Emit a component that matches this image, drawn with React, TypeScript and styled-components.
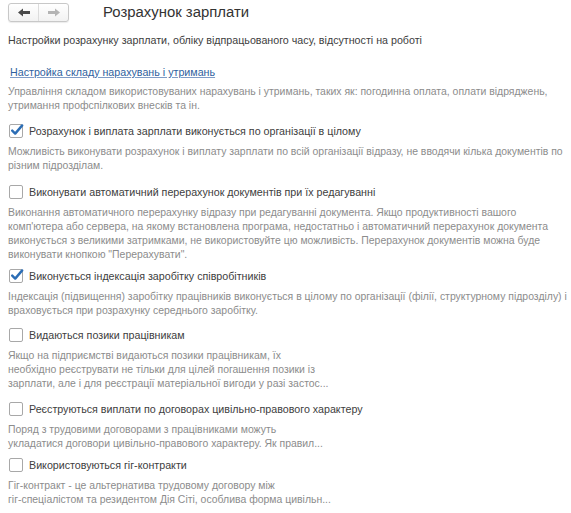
import React from "react";
import styled, { createGlobalStyle } from "styled-components";

const Global = createGlobalStyle`
  html, body { margin: 0; padding: 0; background: #ffffff; }
  body { font-family: "Liberation Sans", Arial, sans-serif; }
`;

const Page = styled.div`
  width: 571px;
  height: 513px;
  overflow: hidden;
  padding: 3px 8px 0 8px;
  box-sizing: border-box;
`;

const Header = styled.div`
  display: flex;
  align-items: center;
  height: 19px;
`;

const NavGroup = styled.div`
  display: flex;
  border: 1px solid #c8c8c8;
  border-radius: 3px;
  background: linear-gradient(#ffffff, #f2f2f2);
  box-shadow: 0 1px 1px rgba(0, 0, 0, 0.08);
`;

const NavButton = styled.div<{ $first?: boolean }>`
  width: 29px;
  height: 17px;
  display: flex;
  align-items: center;
  justify-content: center;
  border-left: ${(p) => (p.$first ? "none" : "1px solid #dcdcdc")};
`;

const Title = styled.h1`
  margin: 0 0 0 34px;
  font-size: 14.9px;
  font-weight: normal;
  color: #333333;
  line-height: 19px;
`;

const Subtitle = styled.div`
  margin-top: 11px;
  font-size: 10.7px;
  line-height: 14px;
  color: #404040;
`;

const LinkText = styled.a`
  display: inline-block;
  margin: 18px 0 0 2px;
  font-size: 10.7px;
  line-height: 14px;
  color: #2f5f9e;
  text-decoration: underline;
  text-decoration-color: #7f9cc6;
`;

const Section = styled.div<{ $gap?: number }>`
  display: flex;
  flex-direction: column;
  margin-top: ${(p) => p.$gap ?? 10}px;
`;

const Description = styled.div<{ $top?: number }>`
  margin-top: ${(p) => p.$top ?? 7}px;
  font-size: 10.45px;
  line-height: 14px;
  color: #8c8c8c;
  white-space: nowrap;
`;

const Line = styled.div``;

const CheckRow = styled.label`
  display: flex;
  align-items: center;
  gap: 6px;
  font-size: 10.7px;
  line-height: 14px;
  color: #404040;
  padding-left: 1px;
`;

const Box = styled.span`
  width: 12px;
  height: 12px;
  border: 1px solid #a8a8a8;
  border-radius: 2px;
  background: #ffffff;
  position: relative;
  flex: none;
`;

const Check = styled.svg`
  position: absolute;
  left: 0px;
  top: -2px;
`;

function ArrowLeft({ color }: { color: string }) {
  return (
    <svg width="12" height="9" viewBox="0 0 12 9">
      <path d="M0 4.5 L5 0.5 L5 3 L12 3 L12 6 L5 6 L5 8.5 Z" fill={color} />
    </svg>
  );
}

function ArrowRight({ color }: { color: string }) {
  return (
    <svg width="12" height="9" viewBox="0 0 12 9">
      <path d="M12 4.5 L7 0.5 L7 3 L0 3 L0 6 L7 6 L7 8.5 Z" fill={color} />
    </svg>
  );
}

function CheckBox({ checked }: { checked?: boolean }) {
  return (
    <Box>
      {checked && (
        <Check width="14" height="14" viewBox="0 0 14 14">
          <path
            d="M2.2 7.6 L5.2 10.6 L12.2 2.4"
            fill="none"
            stroke="#2b6db5"
            strokeWidth="2.4"
            strokeLinecap="round"
            strokeLinejoin="round"
          />
        </Check>
      )}
    </Box>
  );
}

type Item = {
  label: string;
  checked?: boolean;
  lines: string[];
  gap: number;
};

const items: Item[] = [
  {
    label: "Розрахунок і виплата зарплати виконується по організації в цілому",
    checked: true,
    gap: 11,
    lines: [
      "Можливість виконувати розрахунок і виплату зарплати по всій організації відразу, не вводячи кілька документів по",
      "різним підрозділам.",
    ],
  },
  {
    label: "Виконувати автоматичний перерахунок документів при їх редагуванні",
    gap: 12,
    lines: [
      "Виконання автоматичного перерахунку відразу при редагуванні документа. Якщо продуктивності вашого",
      "комп'ютера або сервера, на якому встановлена програма, недостатньо і автоматичний перерахунок документа",
      "виконується з великими затримками, не використовуйте цю можливість. Перерахунок документів можна буде",
      "виконувати кнопкою \"Перерахувати\".",
    ],
  },
  {
    label: "Виконується індексація заробітку співробітників",
    checked: true,
    gap: 7,
    lines: [
      "Індексація (підвищення) заробітку працівників виконується в цілому по організації (філії, структурному підрозділу) і",
      "враховується при розрахунку середнього заробітку.",
    ],
  },
  {
    label: "Видаються позики працівникам",
    gap: 10,
    lines: [
      "Якщо на підприємстві видаються позики працівникам, їх",
      "необхідно реєструвати не тільки для цілей погашення позики із",
      "зарплати, але і для реєстрації матеріальної вигоди у разі застос...",
    ],
  },
  {
    label: "Реєструються виплати по договорах цивільно-правового характеру",
    gap: 11,
    lines: [
      "Поряд з трудовими договорами з працівниками можуть",
      "укладатися договори цивільно-правового характеру. Як правил...",
    ],
  },
  {
    label: "Використовуються гіг-контракти",
    gap: 7,
    lines: [
      "Гіг-контракт - це альтернатива трудовому договору між",
      "гіг-спеціалістом та резидентом Дія Сіті, особлива форма цивільн...",
    ],
  },
];

export default function App() {
  return (
    <>
      <Global />
      <Page>
        <Header>
          <NavGroup>
            <NavButton $first>
              <ArrowLeft color="#4a4a4a" />
            </NavButton>
            <NavButton>
              <ArrowRight color="#b4b4b4" />
            </NavButton>
          </NavGroup>
          <Title>Розрахунок зарплати</Title>
        </Header>
        <Subtitle>
          Настройки розрахунку зарплати, обліку відпрацьованого часу, відсутності на роботі
        </Subtitle>
        <div>
          <LinkText href="#">Настройка складу нарахувань і утримань</LinkText>
        </div>
        <Description $top={5}>
          <Line>
            Управління складом використовуваних нарахувань і утримань, таких як: погодинна оплата, оплати відряджень,
          </Line>
          <Line>утримання профспілкових внесків та ін.</Line>
        </Description>
        {items.map((it) => (
          <Section key={it.label} $gap={it.gap}>
            <CheckRow>
              <CheckBox checked={it.checked} />
              {it.label}
            </CheckRow>
            <Description>
              {it.lines.map((l) => (
                <Line key={l}>{l}</Line>
              ))}
            </Description>
          </Section>
        ))}
      </Page>
    </>
  );
}
